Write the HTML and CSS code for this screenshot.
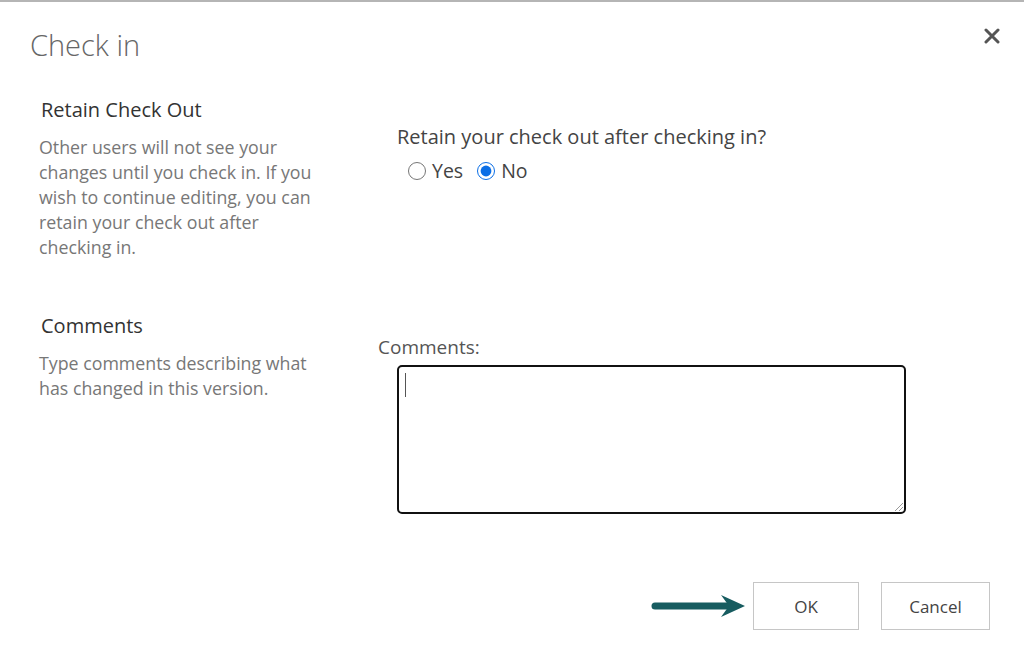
FILE: index.html
```html
<!DOCTYPE html>
<html lang="en">
<head>
    <meta charset="UTF-8">
    <meta name="viewport" content="width=device-width, initial-scale=1.0">
    <title>Check in</title>
    <link rel="stylesheet" href="styles.css">
</head>
<body>

<div class="dialog">
    <div class="dialog-header">
        <h1>Check in</h1>
        <button class="close-btn" aria-label="Close">
            <svg width="16" height="16" viewBox="0 0 16 16">
                <path d="M2 2 L14 14 M14 2 L2 14" stroke="#555" stroke-width="3" stroke-linecap="round"/>
            </svg>
        </button>
    </div>

    <div class="section retain">
        <div class="info">
            <h2>Retain Check Out</h2>
            <p>Other users will not see your changes until you check in. If you wish to continue editing, you can retain your check out after checking in.</p>
        </div>
        <div class="field">
            <div class="question">Retain your check out after checking in?</div>
            <div class="radios">
                <label><input type="radio" name="retain"> Yes</label>
                <label><input type="radio" name="retain" checked> No</label>
            </div>
        </div>
    </div>

    <div class="section comments">
        <div class="info">
            <h2>Comments</h2>
            <p>Type comments describing what has changed in this version.</p>
        </div>
        <div class="field">
            <div class="comments-label">Comments:</div>
            <div class="textbox"><span class="caret"></span></div>
        </div>
    </div>

    <div class="buttons">
        <svg class="arrow" width="96" height="28" viewBox="0 0 96 28">
            <path d="M4 14 L78 14" stroke="#175c60" stroke-width="7" stroke-linecap="round"/>
            <path d="M70 3 L94 14 L70 25 L78 14 Z" fill="#175c60"/>
        </svg>
        <button class="btn">OK</button>
        <button class="btn">Cancel</button>
    </div>
</div>

</body>
</html>
```

FILE: styles.css
```css
body {
    font-family: "Open Sans", "Noto Sans", sans-serif;
    background-color: #fff;
    margin: 0;
}
.dialog {
    border-top: 2px solid #b5b5b5;
    height: 668px;
    position: relative;
}
.dialog-header {
    display: flex;
    justify-content: space-between;
    align-items: flex-start;
    padding: 24px 24px 0 30px;
}
.dialog-header h1 {
    margin: 0;
    font-size: 29px;
    font-weight: 300;
    color: #666;
    line-height: 38px;
}
.close-btn {
    background: none;
    border: none;
    padding: 0;
    margin-top: 2px;
    cursor: pointer;
}
.section {
    display: grid;
    grid-template-columns: 358px 1fr;
    padding-left: 39px;
}
.retain {
    margin-top: 34px;
}
.info h2 {
    margin: 0 0 0 2px;
    font-size: 20px;
    font-weight: 400;
    color: #333;
    line-height: 24px;
}
.info p {
    margin: 13px 0 0 0;
    width: 292px;
    font-size: 17.8px;
    line-height: 25px;
    color: #777;
}
.question {
    margin-top: 27px;
    font-size: 20px;
    color: #444;
    line-height: 24px;
}
.radios {
    display: flex;
    gap: 14px;
    margin-top: 11px;
    margin-left: 11px;
}
.radios label {
    display: flex;
    align-items: center;
    gap: 6px;
    font-size: 19.5px;
    color: #444;
    line-height: 22px;
}
.radios input {
    margin: 0;
    width: 18px;
    height: 18px;
    accent-color: #0a6ee6;
}
.comments {
    margin-top: 54px;
}
.comments-label {
    margin: 21px 0 0 -19px;
    font-size: 19px;
    color: #555;
    line-height: 24px;
}
.textbox {
    margin-top: 6px;
    width: 505px;
    height: 145px;
    border: 2px solid #111;
    border-radius: 5px;
    position: relative;
}
.textbox::after {
    content: "";
    position: absolute;
    right: 1px;
    bottom: 1px;
    width: 8px;
    height: 8px;
    background: linear-gradient(135deg, transparent 45%, #999 45%, #999 55%, transparent 55%, transparent 70%, #999 70%, #999 80%, transparent 80%);
}
.caret {
    display: block;
    margin: 6px 0 0 6px;
    width: 1px;
    height: 24px;
    background-color: #555;
}
.buttons {
    position: absolute;
    right: 34px;
    top: 580px;
    display: flex;
    align-items: center;
}
.arrow {
    margin-right: 6px;
}
.btn {
    font-family: "Open Sans", "Noto Sans", sans-serif;
    font-size: 17px;
    color: #444;
    background-color: #fff;
    border: 1px solid #c6c6c6;
    height: 48px;
    margin-left: 22px;
    cursor: pointer;
}
.btn:first-of-type {
    margin-left: 0;
    width: 106px;
}
.btn:last-of-type {
    width: 109px;
}
```
